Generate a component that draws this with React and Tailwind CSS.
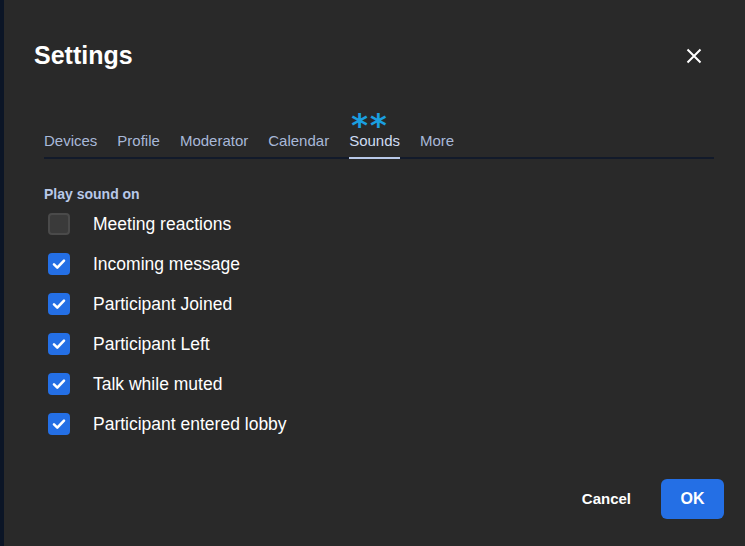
import React from 'react';

const tabs = ['Devices', 'Profile', 'Moderator', 'Calendar', 'Sounds', 'More'];

const sounds = [
  { label: 'Meeting reactions', checked: false },
  { label: 'Incoming message', checked: true },
  { label: 'Participant Joined', checked: true },
  { label: 'Participant Left', checked: true },
  { label: 'Talk while muted', checked: true },
  { label: 'Participant entered lobby', checked: true },
];

const Check = ({ checked }) =>
  checked ? (
    <div className="w-[22px] h-[22px] rounded-[4px] bg-[#246fe5] flex items-center justify-center">
      <svg width="16" height="16" viewBox="0 0 16 16" fill="none">
        <path d="M3 8.4l3.3 3.2L13 4.6" stroke="white" strokeWidth="2.6" strokeLinecap="round" strokeLinejoin="round" />
      </svg>
    </div>
  ) : (
    <div className="w-[22px] h-[22px] rounded-[4px] bg-[#3a3a3a] border-2 border-[#4a4a4a]" />
  );

const App = () => {
  return (
    <div className="w-[745px] h-[546px] flex bg-[#292929] overflow-hidden" style={{ fontFamily: '"Liberation Sans", Arial, sans-serif' }}>
      <div className="w-[4px] bg-[#0b1526]" />
      <div className="flex-1 flex flex-col pl-[30px] pr-[21px]">
        <div className="flex items-center justify-between h-[56px] mt-[28px]">
          <h1 className="text-[25px] font-bold text-white">Settings</h1>
          <button className="mr-[22px] text-white">
            <svg width="16" height="16" viewBox="0 0 16 16">
              <path d="M1.5 1.5l13 13M14.5 1.5l-13 13" stroke="white" strokeWidth="2" />
            </svg>
          </button>
        </div>

        <div className="ml-[10px] mr-[10px] mt-[48px] flex border-b-2 border-[#121a2a]">
          {tabs.map((t) => (
            <div key={t} className="relative mr-[20px]">
              {t === 'Sounds' && (
                <span
                  className="absolute left-[2px] -top-[12px] text-[#1a9fe0] font-bold text-[32px] leading-[10px] tracking-[2px]"
                  style={{ fontFamily: '"DejaVu Sans", sans-serif' }}
                >
                  **
                </span>
              )}
              <div
                className={`pt-[1px] pb-[8px] text-[15px] leading-[16px] ${
                  t === 'Sounds' ? 'text-[#cfdcf2] border-b-2 border-[#b8c8e8] -mb-[2px]' : 'text-[#a8b8d8]'
                }`}
              >
                {t}
              </div>
            </div>
          ))}
        </div>

        <div className="ml-[10px] mt-[27px] text-[14px] font-bold text-[#b8c8e8] leading-[16px]">Play sound on</div>

        <div className="ml-[14px] mt-[2px] flex flex-col">
          {sounds.map((s) => (
            <div key={s.label} className="flex items-center h-[40px]">
              <Check checked={s.checked} />
              <span className="ml-[23px] text-[17.5px] text-white">{s.label}</span>
            </div>
          ))}
        </div>

        <div className="mt-auto mb-[27px] flex items-center justify-end gap-[30px]">
          <button className="text-[15px] font-bold text-white">Cancel</button>
          <button className="w-[63px] h-[40px] rounded-[6px] bg-[#246fe5] text-[16px] font-bold text-white">OK</button>
        </div>
      </div>
    </div>
  );
};

export default App;
